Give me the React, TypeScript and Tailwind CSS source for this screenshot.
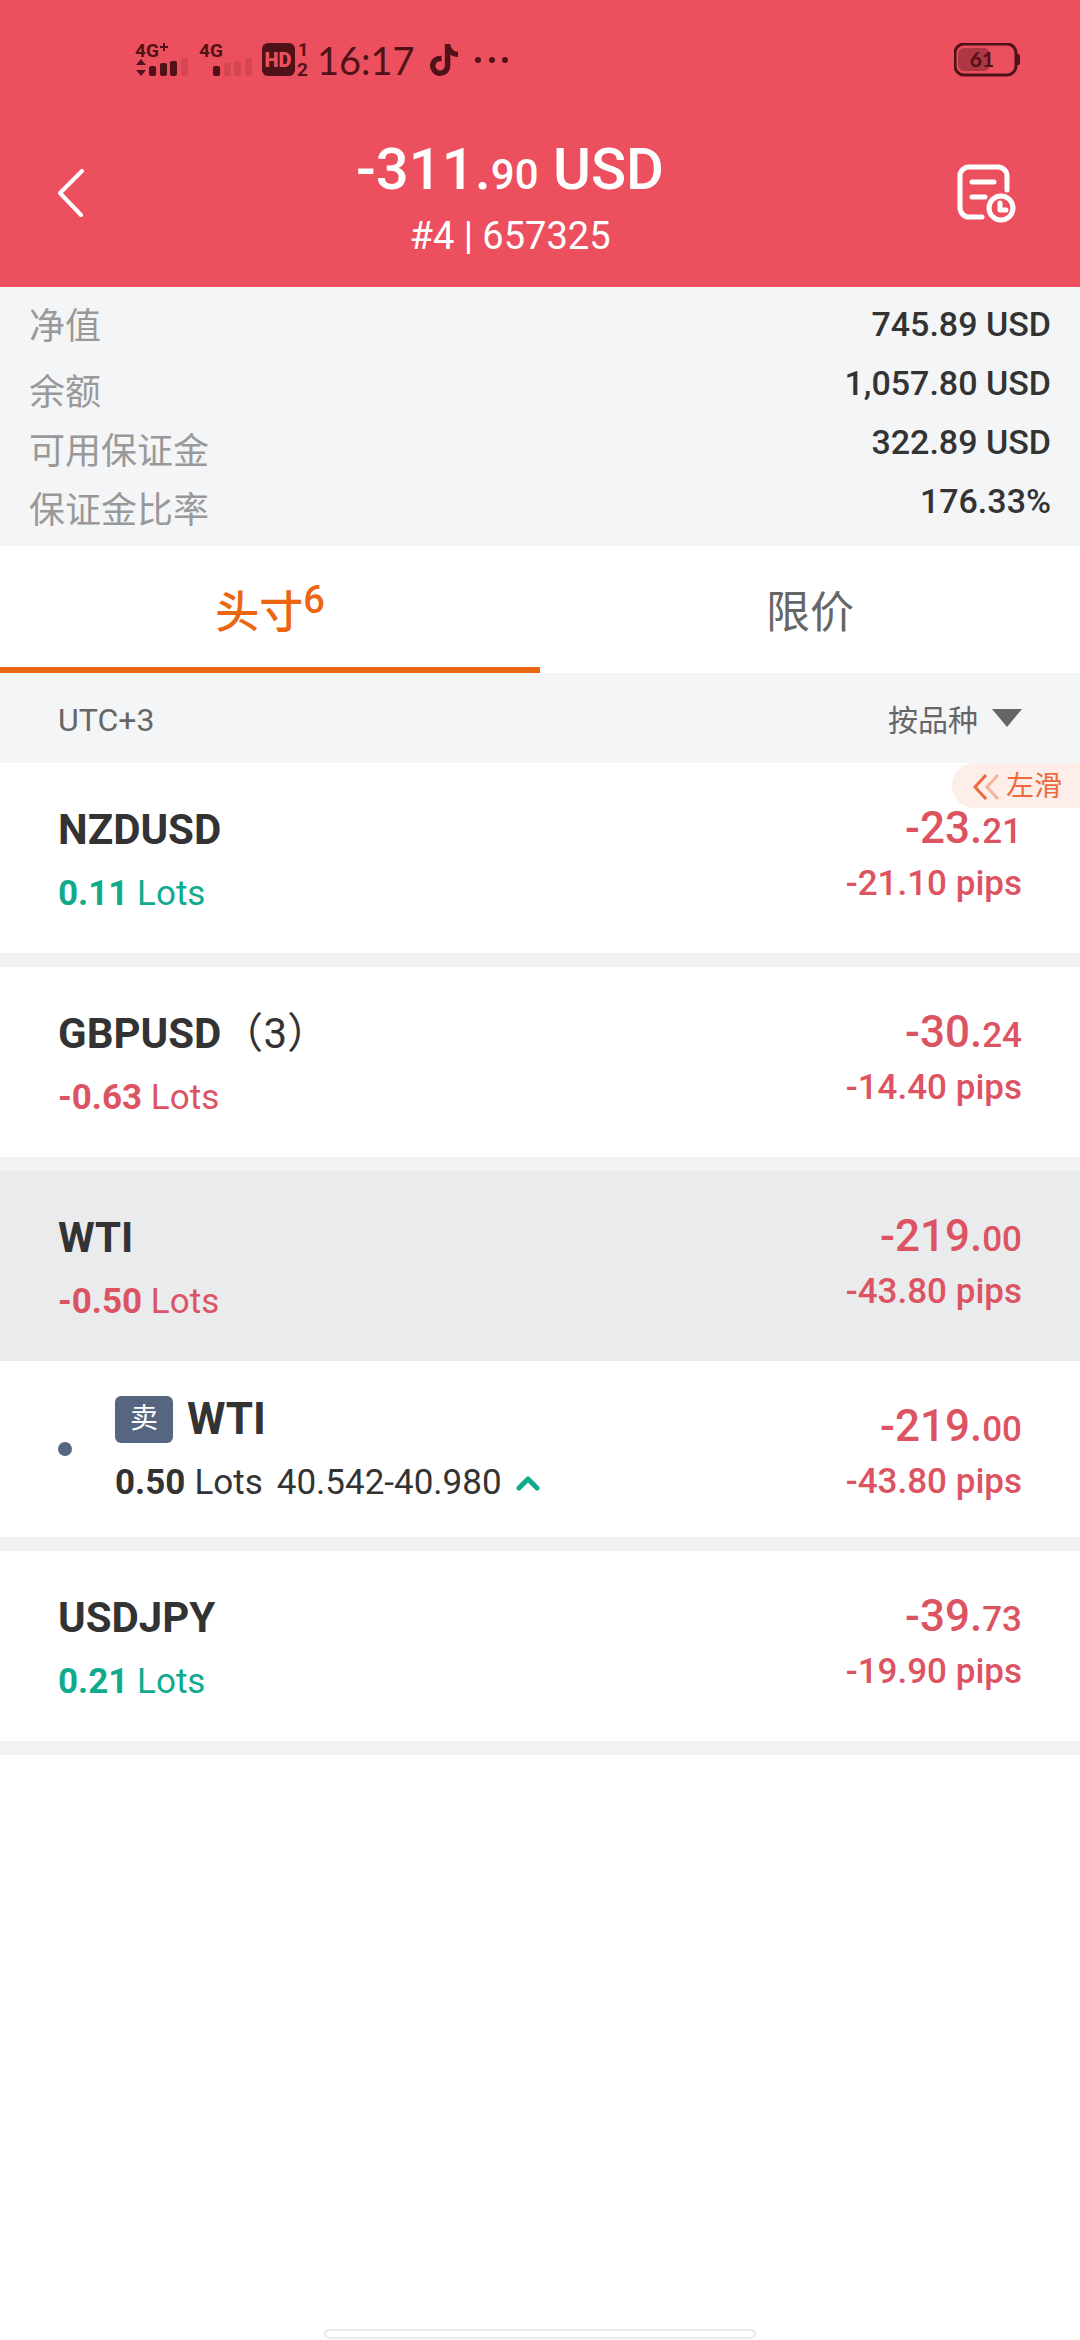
import { useState } from "react";
import { FaTiktok } from "react-icons/fa";
import clsx from "clsx";

type Position = {
    symbol: string;
    count?: number;
    lots: string;
    profit: [string, string];
    pips: string;
    active?: boolean;
    detail?: { side: string; lots: string; price: string };
};

const SUMMARY = [
    { label: "净值", value: "745.89 USD" },
    { label: "余额", value: "1,057.80 USD" },
    { label: "可用保证金", value: "322.89 USD" },
    { label: "保证金比率", value: "176.33%" },
];

const POSITIONS: Position[] = [
    { symbol: "NZDUSD", lots: "0.11", profit: ["-23.", "21"], pips: "-21.10" },
    { symbol: "GBPUSD", count: 3, lots: "-0.63", profit: ["-30.", "24"], pips: "-14.40" },
    {
        symbol: "WTI",
        lots: "-0.50",
        profit: ["-219.", "00"],
        pips: "-43.80",
        active: true,
        detail: { side: "卖", lots: "0.50", price: "40.542-40.980" },
    },
    { symbol: "USDJPY", lots: "0.21", profit: ["-39.", "73"], pips: "-19.90" },
];

const BARS = [
    { x: 0, h: 10 },
    { x: 11, h: 13 },
    { x: 21, h: 15 },
    { x: 32, h: 18 },
];

function Signal({ label, plus, level }: { label: string; plus?: boolean; level: number }) {
    return (
        <svg viewBox="0 -8 54 52" className="h-[52px] w-[54px]" fill="currentColor">
            <text x="0" y="15" fontSize="19" fontWeight="700">{label}</text>
            {plus && (
                <>
                    <path d="M28 1h2v3h3v2h-3v3h-2V6h-3V4h3z" />
                    <path d="M6 17l5 6H1zM6 34l5-6H1z" />
                </>
            )}
            {BARS.map((bar, i) => (
                <rect key={bar.x} x={14 + bar.x} y={34 - bar.h} width="7" height={bar.h} rx="2" opacity={i < level ? 1 : 0.16} />
            ))}
        </svg>
    );
}

function StatusBar() {
    return (
        <div className="flex h-[120px] items-center pl-[135px] pr-[60px] text-[#4f1219]">
            <Signal label="4G" plus level={3} />
            <div className="ml-[10px]">
                <Signal label="4G" level={1} />
            </div>
            <svg viewBox="0 -8 48 52" className="ml-[9px] h-[52px] w-[48px]" fill="currentColor">
                <rect x="0" y="1" width="33" height="33" rx="6" />
                <text x="16" y="25" fontSize="20" fontWeight="900" textAnchor="middle" fill="#ec505e">HD</text>
                <text x="36" y="14" fontSize="18" fontWeight="700">1</text>
                <text x="35" y="34" fontSize="19" fontWeight="700">2</text>
            </svg>
            <time className="ml-[7px] font-[Lato] text-[38px] leading-[48px]">16:17</time>
            <FaTiktok className="ml-[15px] h-[32px] w-[28px]" />
            <svg viewBox="0 0 36 8" className="ml-[16px] h-[8px] w-[36px]" fill="currentColor">
                <circle cx="4" cy="4" r="3" />
                <circle cx="18" cy="4" r="3" />
                <circle cx="31" cy="4" r="3" />
            </svg>
            <svg viewBox="0 0 66 34" className="ml-auto h-[34px] w-[66px]" fill="currentColor">
                <rect x="1" y="1" width="61" height="31" rx="9" fill="none" stroke="currentColor" strokeWidth="3" />
                <rect x="4" y="5" width="32" height="23" rx="6" opacity="0.4" />
                <path d="M63 11h1a2 2 0 0 1 2 2v7a2 2 0 0 1-2 2h-1z" />
                <text x="28" y="24" fontFamily="Lato" fontSize="21" fontWeight="700" textAnchor="middle">61</text>
            </svg>
        </div>
    );
}

function Header() {
    return (
        <header className="bg-[#ec505e] text-white">
            <StatusBar />
            <div className="flex h-[167px] items-start">
                <button aria-label="返回" className="flex h-[146px] w-[120px] items-center justify-center pl-[22px]">
                    <svg viewBox="0 0 28 48" className="h-[48px] w-[28px]" fill="none" stroke="currentColor" strokeWidth="4" strokeLinecap="round" strokeLinejoin="round">
                        <path d="M25 2L3 24l21 22" />
                    </svg>
                </button>
                <div className="flex-1 pt-[12px] text-center">
                    <h1 className="text-[58px] font-medium leading-[74px]">
                        -311.<span className="text-[42px] leading-none">90</span> USD
                    </h1>
                    <p className="text-[38px] leading-[60px]">#4 | 657325</p>
                </div>
                <button aria-label="历史" className="flex h-[146px] w-[180px] items-center pl-[57px]">
                    <svg viewBox="0 0 60 60" className="h-[60px] w-[60px]" fill="none" stroke="currentColor" strokeWidth="5" strokeLinecap="round" strokeLinejoin="round">
                        <path d="M50 27V13a9 9 0 0 0-9-9H12a9 9 0 0 0-9 9v32a9 9 0 0 0 9 9h13M15 19h22M15 34h13" />
                        <circle cx="44" cy="45" r="12" />
                        <path d="M43 40v7h6" />
                    </svg>
                </button>
            </div>
        </header>
    );
}

function Summary() {
    return (
        <dl className="grid h-[259px] auto-cols-fr grid-flow-col grid-rows-[59px_59px_59px_59px] content-start bg-[#f4f5f7] px-[29px] pt-[8px] leading-[59px]">
            {SUMMARY.map((row) => (
                <dt key={row.label} className="pt-[10px] text-[36px] text-[#999] first:pt-[3px]">{row.label}</dt>
            ))}
            {SUMMARY.map((row) => (
                <dd key={row.label} className="text-right text-[34px] font-medium text-[#333]">{row.value}</dd>
            ))}
        </dl>
    );
}

function Profit({ position }: { position: Position }) {
    return (
        <div className="pt-[37px] text-right font-medium text-[#dc5462]">
            <p className="text-[44px] leading-[56px]">
                {position.profit[0]}<span className="text-[35px] leading-none">{position.profit[1]}</span>
            </p>
            <p className="text-[35px] leading-[56px]">{position.pips} pips</p>
        </div>
    );
}

function PositionRow({ position }: { position: Position }) {
    const { detail } = position;
    return (
        <li className="border-b-[14px] border-[#f2f2f2]">
            <div className={clsx("flex h-[190px] justify-between px-[58px]", position.active && "bg-[#eaebed]")}>
                <div className="pt-[35px]">
                    <h2 className="text-[42px] font-bold leading-[64px] text-[#333]">
                        {position.symbol}
                        {position.count && <span className="font-normal">（{position.count}）</span>}
                    </h2>
                    <p className={clsx("text-[35px] leading-[64px]", position.lots.startsWith("-") ? "text-[#dc5462]" : "text-[#10aa8d]")}>
                        <b>{position.lots}</b> Lots
                    </p>
                </div>
                <Profit position={position} />
            </div>

            {/* Expanded order */}
            {detail && (
                <div className="flex h-[176px] px-[58px]">
                    <span className="mt-[81px] size-[14px] rounded-full bg-[#566680]" />
                    <div className="flex-1 pl-[43px] pt-[26px]">
                        <div className="flex items-center gap-[14px]">
                            <span className="flex h-[47px] w-[58px] items-center justify-center rounded-md bg-[#566680] text-[28px] text-white">{detail.side}</span>
                            <h3 className="text-[44px] font-bold leading-[64px] text-[#333]">{position.symbol}</h3>
                        </div>
                        <p className="flex items-center text-[35px] leading-[64px] text-[#333]">
                            <b className="mr-[9px]">{detail.lots}</b>Lots
                            <span className="ml-[14px]">{detail.price}</span>
                            <svg viewBox="0 0 24 16" className="ml-[14px] h-[16px] w-[24px]" fill="none" stroke="#10aa8d" strokeWidth="5" strokeLinecap="round" strokeLinejoin="round">
                                <path d="M3 13l9-9 9 9" />
                            </svg>
                        </p>
                    </div>
                    <Profit position={position} />
                </div>
            )}
        </li>
    );
}

export default function App() {
    const [tab, setTab] = useState("positions");

    const tabClass = (name: string) =>
        clsx(
            "flex h-[127px] flex-1 items-center justify-center border-b-[6px] pt-[12px] text-[44px]",
            tab === name ? "border-[#eb6611] font-medium text-[#eb6611]" : "border-transparent text-[#666]"
        );

    return (
        <div className="flex min-h-screen flex-col bg-white font-['Roboto','Noto_Sans_CJK_SC',sans-serif]">
            <Header />
            <Summary />

            <div role="tablist" className="flex">
                <button role="tab" aria-selected={tab === "positions"} onClick={() => setTab("positions")} className={tabClass("positions")}>
                    头寸<span className="pb-[24px] text-[38px]">6</span>
                </button>
                <button role="tab" aria-selected={tab === "limits"} onClick={() => setTab("limits")} className={tabClass("limits")}>
                    限价
                </button>
            </div>

            <div className="flex h-[90px] items-center justify-between bg-[#f4f5f7] px-[58px] pt-[4px] text-[#666]">
                <span className="text-[32px]">UTC+3</span>
                <div className="relative flex items-center">
                    <select aria-label="排序" className="appearance-none bg-transparent pr-[44px] text-[30px]">
                        <option>按品种</option>
                    </select>
                    <svg viewBox="0 0 30 22" className="pointer-events-none absolute right-0 h-[22px] w-[30px]" fill="currentColor">
                        <path d="M0 0h30L15 18z" />
                    </svg>
                </div>
            </div>

            <main className="relative">
                <ul>
                    {POSITIONS.map((position) => (
                        <PositionRow key={position.symbol} position={position} />
                    ))}
                </ul>

                {/* Swipe hint */}
                <div className="absolute right-0 top-0 flex h-[45px] items-center gap-[6px] rounded-l-full bg-[#fdeee9] pl-[20px] pr-[18px] pt-[2px] text-[28px] text-[#ec6a3c]">
                    <svg viewBox="0 0 28 26" className="h-[26px] w-[28px]" fill="none" stroke="currentColor" strokeWidth="3">
                        <path d="M14 1L3 13l11 12" />
                        <path d="M26 1L15 13l11 12" opacity="0.45" />
                    </svg>
                    左滑
                </div>
            </main>

            <div className="mx-auto mb-px mt-auto h-[10px] w-2/5 rounded-full border-2 border-[#e9e9e9]" />
        </div>
    );
}
